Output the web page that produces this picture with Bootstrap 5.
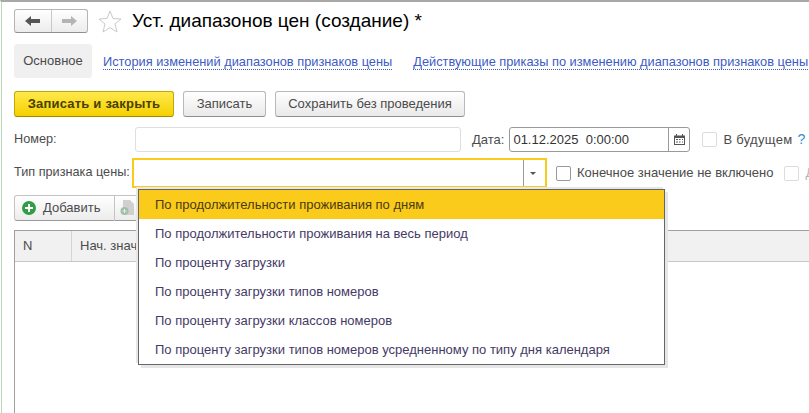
<!DOCTYPE html>
<html lang="ru">
<head>
  <meta charset="UTF-8" />
  <meta name="viewport" content="width=device-width, initial-scale=1" />
  <title>Уст. диапазонов цен (создание)</title>
  <link href="https://cdn.jsdelivr.net/npm/bootstrap@5.3.0/dist/css/bootstrap.min.css" rel="stylesheet" />
  <style>
    html, body { height: 413px; overflow: hidden; }
    body { font-family: "Liberation Sans", Arial, sans-serif; font-size: 13px; color: #4b4b4b; background: #fff; }
    .page-wrap { position: relative; height: 413px; overflow: hidden; border-top: 2px solid #a8a8a8; border-left: 1px solid #fff; padding: 7px 0 0 13px; }
    .page-wrap::before { content: ""; position: absolute; left: 0; top: 0; bottom: 0; width: 1px; background: #b9d8b5; }
    .nav-pair { width: 74px; height: 24px; border: 1px solid #b5b5b5; border-bottom-color: #8f8f8f; border-radius: 3px; background: linear-gradient(#fff, #ececec); }
    .nav-pair span { flex: 1; height: 100%; }
    .nav-pair span + span { border-left: 1px solid #c8c8c8; }
    .star-icon { margin: 0 10px 0 10px; }
    .doc-title { font-size: 19px; color: #000; line-height: 24px; margin: 0; font-weight: 400; }
    .tab-row { margin-top: 11px; height: 34px; }
    .tab-active { width: 78px; height: 34px; background: #f0f0f0; border-radius: 3px; color: #4b4b4b; }
    .tab-link { color: #3c5cc4; text-decoration: none; border-bottom: 1px dotted #3c5cc4; line-height: 14px; margin-left: 11px; font-size: 12.8px; margin-top: 2px; }
    .tab-link + .tab-link { margin-left: 21px; white-space: nowrap; }
    .cmd-row { margin-top: 13px; gap: 9px; }
    .cmd-btn { height: 26px; border: 1px solid #b9b9b9; border-bottom-color: #8f8f8f; border-radius: 3px; background: linear-gradient(#fff, #e9e9e9); color: #4b4b4b; font-size: 13px; padding: 0; }
    .cmd-main { width: 160px; background: linear-gradient(#ffe94d, #f5d000); border-color: #c2a800; border-bottom-color: #a08a00; font-weight: 700; color: #4a4000; letter-spacing: .2px; }
    .cmd-save { width: 83px; }
    .cmd-post { width: 190px; }
    .form-line { height: 25px; margin-top: 10px; }
    .field-label { width: 121px; flex: none; font-size: 12.7px; }
    .num-field { width: 326px; height: 25px; border: 1px solid #dedede; border-radius: 3px; }
    .date-label { margin: 0 5px 0 11px; }
    .date-field { width: 181px; height: 25px; border: 1px solid #9a9a9a; border-radius: 3px; color: #333; font-size: 13px; padding-left: 3px; }
    .date-text { flex: 1; white-space: pre; }
    .cal-btn { width: 21px; height: 100%; border-left: 1px solid #9a9a9a; }
    .box-mark { width: 15px; height: 15px; flex: none; border: 1px solid #dcdcdc; border-radius: 2px; background: #fff; }
    .box-dark { border-color: #9a9a9a; }
    .box-future { margin: 0 6px 0 12px; }
    .future-text { white-space: nowrap; letter-spacing: .3px; }
    .help-mark { color: #2f8fd0; font-size: 14px; margin-left: 5px; }
    .type-line { height: 30px; margin-top: 6px; white-space: nowrap; }
    .type-label { width: 118px; flex: none; font-size: 12.7px; }
    .type-field { width: 415px; height: 30px; border: 2px solid #fbcb1c; flex: none; }
    .type-sep { width: 1px; height: 26px; background: #9a9a9a; margin-left: auto; margin-right: 6px; }
    .tri-mark { width: 0; height: 0; border: 3px solid transparent; border-top: 3px solid #555; border-bottom: 0; margin-right: 9px; }
    .box-end { margin: 0 6px 0 9px; }
    .box-more { margin: 0 6px 0 11px; }
    .more-text { color: #b5b5b5; }
    .tool-row { margin-top: 7px; }
    .add-btn { width: 101px; height: 26px; border: 1px solid #c4c4c4; border-bottom-color: #9a9a9a; border-radius: 3px 0 0 3px; background: linear-gradient(#fff, #ececec); padding-left: 7px; gap: 7px; color: #4b4b4b; }
    .copy-slot { width: 30px; height: 26px; border: 1px solid #c4c4c4; border-left: 0; border-bottom-color: #9a9a9a; background: linear-gradient(#fff, #ececec); padding-left: 5px; }
    .grid-box { margin-top: 9px; height: 300px; border-left: 1px solid #a0a0a0; border-top: 1px solid #a0a0a0; }
    .grid-head { height: 31px; background: #f1f1f1; border-bottom: 1px solid #c8c8c8; }
    .grid-n { width: 57px; height: 100%; padding-left: 8px; border-right: 1px solid #d4d4d4; flex: none; }
    .grid-start { padding-left: 8px; }
    .drop-list { position: absolute; left: 137px; top: 187px; width: 527px; height: 176px; background: #fff; border: 1px solid #666; box-shadow: -2px -2px 0 #e6e6e6, 3px 3px 0 #e6e6e6; padding: 0; margin: 0; list-style: none; color: #453a66; }
    .drop-list li { height: 29px; padding-left: 16px; display: flex; align-items: center; }
    .drop-list li.is-current { background: #fbcb1c; color: #4a3a10; }
  </style>
</head>
<body>
  <div class="page-wrap">

    <div class="d-flex align-items-center">
      <div class="nav-pair d-flex">
        <span class="d-flex align-items-center justify-content-center">
          <svg width="15" height="10" viewBox="0 0 15 10"><path d="M0 5 L6 0 V3 H15 V7 H6 V10 Z" fill="#555"/></svg>
        </span>
        <span class="d-flex align-items-center justify-content-center">
          <svg width="15" height="10" viewBox="0 0 15 10"><path d="M15 5 L9 0 V3 H0 V7 H9 V10 Z" fill="#b4b4b4"/></svg>
        </span>
      </div>
      <svg class="star-icon" width="24" height="23" viewBox="0 0 24 23"><path d="M12 1 L15 8.500 L23 9 L17 14 L19 22 L12 17.600 L5 22 L7 14 L1 9 L9 8.500 Z" fill="#fff" stroke="#c9c9c9"/></svg>
      <h1 class="doc-title">Уст. диапазонов цен (создание) *</h1>
    </div>

    <div class="tab-row d-flex align-items-center">
      <div class="tab-active d-flex align-items-center justify-content-center">Основное</div>
      <a class="tab-link" href="#">История изменений диапазонов признаков цены</a>
      <a class="tab-link" href="#">Действующие приказы по изменению диапазонов признаков цены</a>
    </div>

    <div class="cmd-row d-flex">
      <button class="cmd-btn cmd-main">Записать и закрыть</button>
      <button class="cmd-btn cmd-save">Записать</button>
      <button class="cmd-btn cmd-post">Сохранить без проведения</button>
    </div>

    <div class="form-line d-flex align-items-center">
      <div class="field-label">Номер:</div>
      <div class="num-field"></div>
      <div class="date-label">Дата:</div>
      <div class="date-field d-flex align-items-center">
        <span class="date-text">01.12.2025  0:00:00</span>
        <span class="cal-btn d-flex align-items-center justify-content-center">
          <svg width="11" height="11" viewBox="0 0 11 11"><path d="M0 1.500 H2 V0 H3 V1.500 H8 V0 H9 V1.500 H11 V11 H0 Z" fill="#555"/><path d="M1 4 H10 V10 H1 Z" fill="#fff"/><path d="M2 5 H4 V6 H2 Z M5 5 H6.500 V6 H5 Z M8 5 H9 V6 H8 Z M2 7.500 H4 V8.500 H2 Z M5 7.500 H6.500 V8.500 H5 Z M8 7.500 H9 V8.500 H8 Z" fill="#555"/></svg>
        </span>
      </div>
      <div class="box-mark box-future"></div>
      <span class="future-text">В будущем</span>
      <span class="help-mark">?</span>
    </div>

    <div class="type-line d-flex align-items-center">
      <div class="type-label">Тип признака цены:</div>
      <div class="type-field d-flex align-items-center">
        <span class="type-sep"></span>
        <span class="tri-mark"></span>
      </div>
      <div class="box-mark box-dark box-end"></div>
      <span>Конечное значение не включено</span>
      <div class="box-mark box-more"></div>
      <span class="more-text">Д</span>
    </div>

    <div class="tool-row d-flex align-items-center">
      <div class="add-btn d-flex align-items-center">
        <svg width="14" height="14" viewBox="0 0 14 14"><circle cx="7" cy="7" r="7" fill="#2f9e44"/><path d="M6 3 H8 V6 H11 V8 H8 V11 H6 V8 H3 V6 H6 Z" fill="#fff"/></svg>
        <span>Добавить</span>
      </div>
      <div class="copy-slot d-flex align-items-center">
        <svg width="14" height="16" viewBox="0 0 14 16"><path d="M3 0 H10 L14 4 V15 H3 Z" fill="#d0d0d0"/><circle cx="4.500" cy="11" r="4" fill="#a3bfa8"/><path d="M4 9 H5 V10.500 H6.500 V11.500 H5 V13 H4 V11.500 H2.500 V10.500 H4 Z" fill="#e4ece5"/></svg>
      </div>
    </div>

    <div class="grid-box">
      <div class="grid-head d-flex align-items-center">
        <div class="grid-n d-flex align-items-center">N</div>
        <div class="grid-start">Нач. значение</div>
      </div>
    </div>

    <ul class="drop-list">
      <li class="is-current">По продолжительности проживания по дням</li>
      <li>По продолжительности проживания на весь период</li>
      <li>По проценту загрузки</li>
      <li>По проценту загрузки типов номеров</li>
      <li>По проценту загрузки классов номеров</li>
      <li>По проценту загрузки типов номеров усредненному по типу дня календаря</li>
    </ul>
  </div>
  <script src="https://cdn.jsdelivr.net/npm/bootstrap@5.3.0/dist/js/bootstrap.bundle.min.js"></script>
</body>
</html>
